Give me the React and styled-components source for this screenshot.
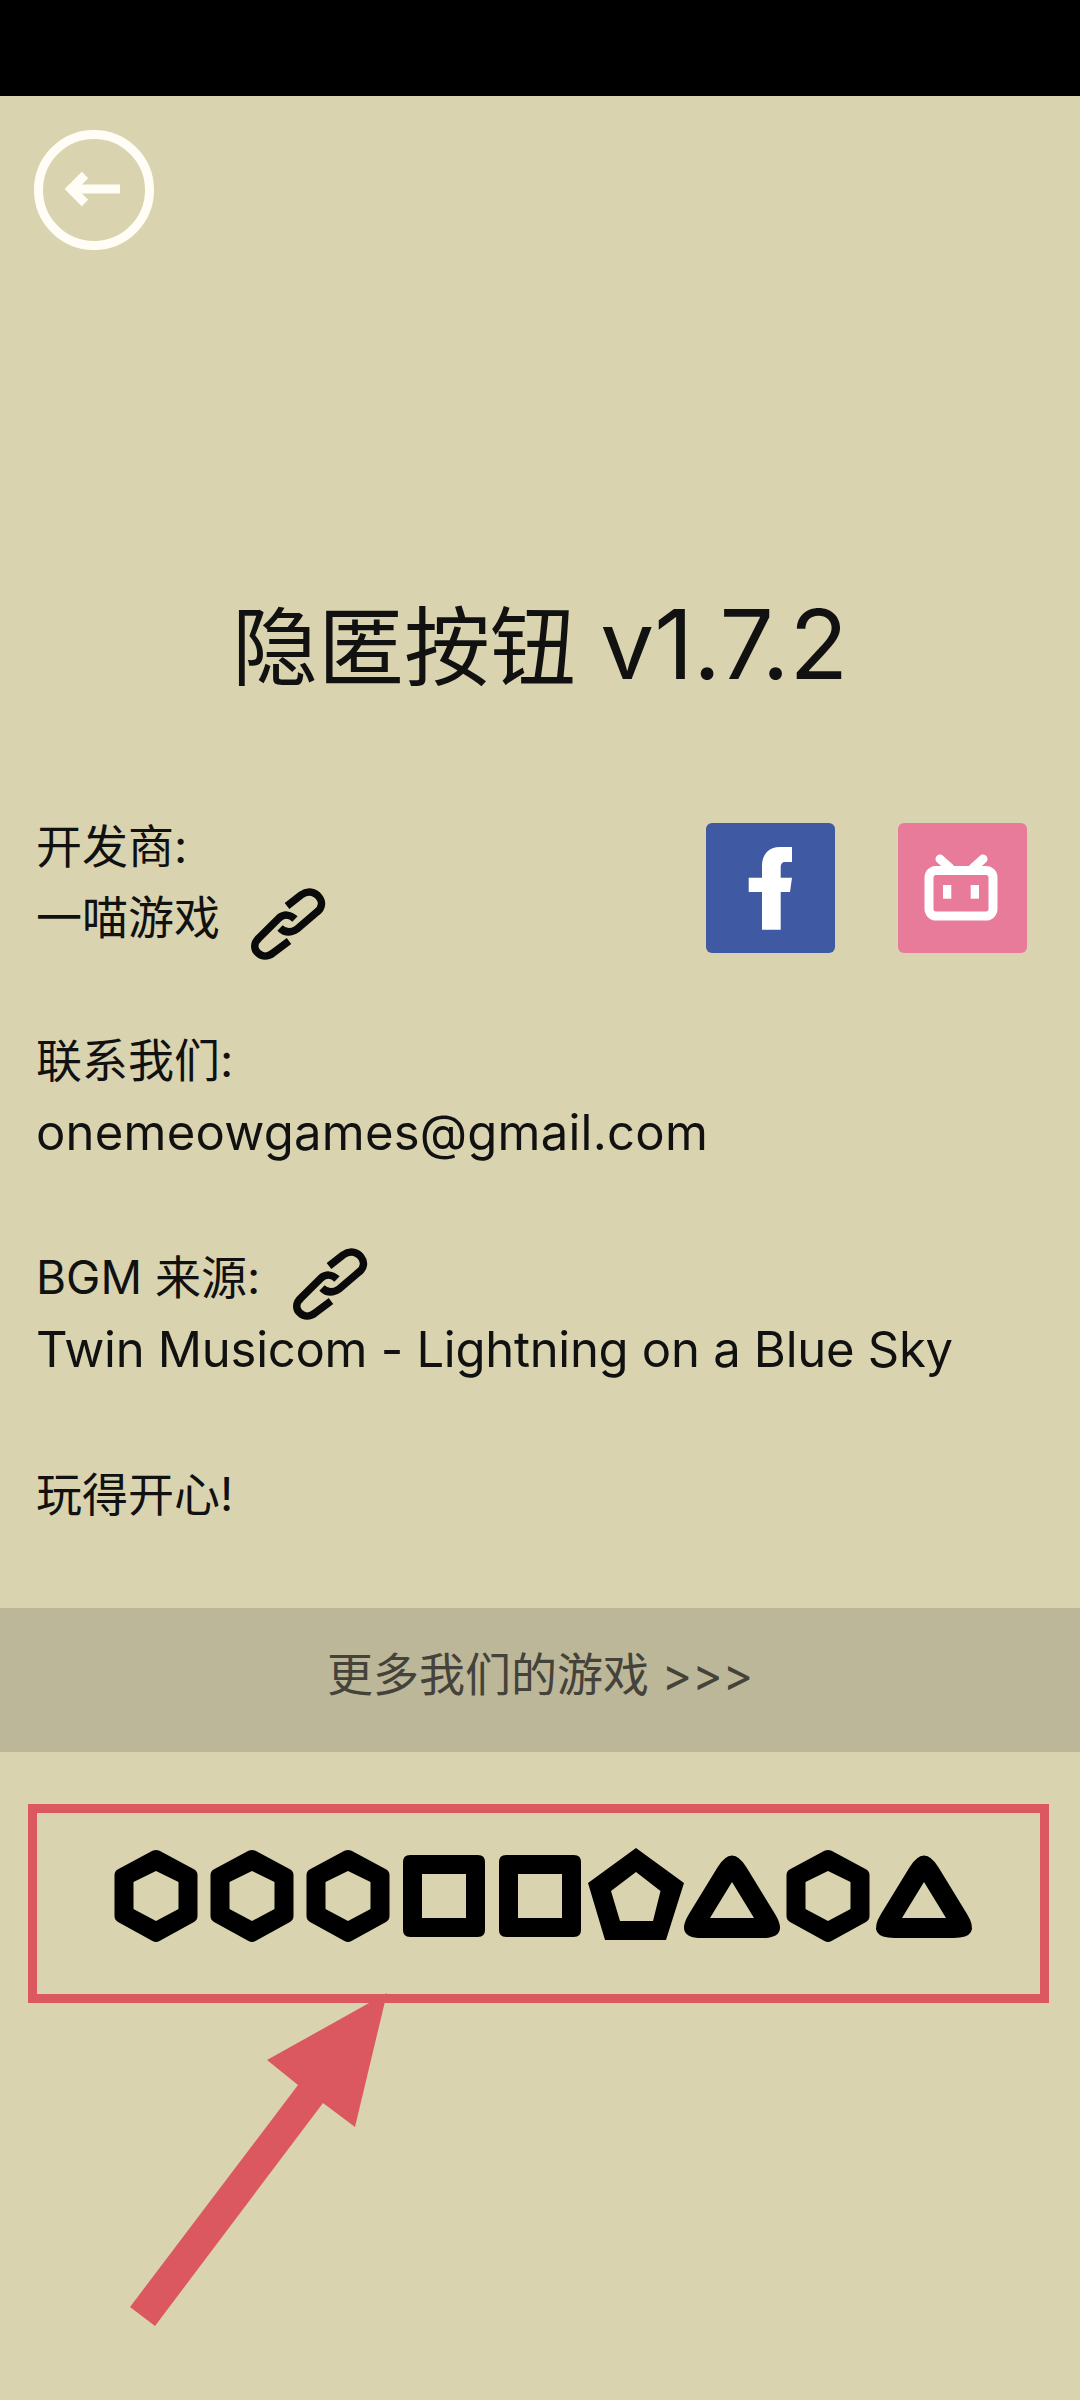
import React from 'react'
import styled, { createGlobalStyle } from 'styled-components'

const RED = '#dc5860'

const GlobalStyle = createGlobalStyle`
  html, body {
    margin: 0;
    padding: 0;
    background: #d9d4af;
  }
  body {
    font-family: Inter, "Noto Sans CJK SC", sans-serif;
    color: #111;
  }
`

const Page = styled.div`
  position: relative;
  width: 1080px;
  height: 2400px;
  overflow: hidden;
  background: #d9d4af;
`

const TopBar = styled.div`
  height: 96px;
  background: #000;
`

const BackButton = styled.button`
  display: flex;
  align-items: center;
  justify-content: center;
  width: 120px;
  height: 120px;
  margin: 34px 0 0 34px;
  padding: 0;
  box-sizing: border-box;
  border: 9px solid #fffdf6;
  border-radius: 50%;
  background: transparent;
`

const Title = styled.h1`
  height: 100px;
  margin: 344px 0 0;
  font-size: 86px;
  line-height: 100px;
  font-weight: 400;
  text-align: center;
  color: #111;
`

const Version = styled.span`
  font-size: 96px;
`

const Info = styled.section`
  display: flex;
  flex-direction: column;
  gap: 72px;
  margin-top: 119px;
  padding: 0 53px 0 34px;
`

const TopRow = styled.div`
  display: flex;
  justify-content: space-between;
  align-items: flex-start;
`

const Block = styled.div`
  display: flex;
  flex-direction: column;
  margin-top: ${ ({ $push }) => $push || 0 }px;
`

const Line = styled.div`
  display: flex;
  align-items: center;
  box-sizing: border-box;
  height: 71px;
  padding-bottom: 12px;
  padding-left: 2px;
  font-size: 46px;
  white-space: nowrap;
`

const LatinLine = styled(Line)`
  padding-bottom: 3px;
  font-size: 49px;
  letter-spacing: ${ ({ $track }) => $track }px;
`

const LinkIcon = styled.svg`
  flex: none;
  width: 74px;
  height: 70px;
  margin: 20px 0 0 ${ ({ $gap }) => $gap }px;
  overflow: visible;
`

const Socials = styled.div`
  display: flex;
  gap: 63px;
  margin-top: 10px;
`

const SocialTile = styled.svg`
  display: block;
  width: 129px;
  height: 130px;
  border-radius: 6px;
  background: ${ ({ $color }) => $color };
`

const MoreBand = styled.div`
  display: flex;
  align-items: center;
  justify-content: center;
  box-sizing: border-box;
  height: 144px;
  margin-top: 76px;
  padding-bottom: 18px;
  background: #bcb798;
  color: #45423a;
  font-size: 46px;
`

const HiddenFrame = styled.div`
  display: flex;
  justify-content: center;
  box-sizing: border-box;
  height: 199px;
  margin: 52px 31px 0 28px;
  padding: 33px 0 0 3px;
  border: 9px solid ${ RED };
`

const ShapeCell = styled.svg`
  display: block;
  flex: none;
  width: 96px;
  height: 100px;
  overflow: visible;
`

const PointerArrow = styled.svg`
  position: absolute;
  left: 120px;
  top: 1985px;
  width: 280px;
  height: 350px;
`

// closed polygon path, corners cut back by r and joined with a curve
const roundedPoly = (points, r = 0) => {
  const n = points.length
  if (!r) return 'M' + points.map(p => p.join(' ')).join('L') + 'Z'
  let d = ''
  points.forEach((p, i) => {
    const prev = points[(i + n - 1) % n]
    const next = points[(i + 1) % n]
    const toward = (q) => {
      const len = Math.hypot(q[0] - p[0], q[1] - p[1])
      return [p[0] + (q[0] - p[0]) * r / len, p[1] + (q[1] - p[1]) * r / len]
    }
    const a = toward(prev)
    const b = toward(next)
    d += `${ i ? 'L' : 'M' }${ a[0] } ${ a[1] }Q${ p[0] } ${ p[1] } ${ b[0] } ${ b[1] }`
  })
  return d + 'Z'
}

const shapes = {
  hex: {
    outer: [[48, 3], [89.5, 25], [89.5, 74], [48, 97], [6.5, 74], [6.5, 25]],
    inner: [[48, 25], [70.5, 36], [70.5, 63], [48, 75], [25.5, 63], [25.5, 36]],
    r: 4,
  },
  square: {
    outer: [[7, 9], [89, 9], [89, 91], [7, 91]],
    inner: [[26, 28], [70, 28], [70, 72], [26, 72]],
    r: 7,
  },
  pentagon: {
    outer: [[48, 2], [96, 37], [78, 94], [17, 94], [0, 37]],
    inner: [[48, 26], [72.5, 45], [65, 75], [32, 75], [23, 45]],
    r: 0,
  },
  triangle: {
    outer: [[48, -2.4], [105.6, 92], [-9.6, 92]],
    inner: [[48, 36], [70, 72], [26, 72]],
    r: 28,
  },
}

const sequence = ['hex', 'hex', 'hex', 'square', 'square', 'pentagon', 'triangle', 'hex', 'triangle']

const Shape = ({ kind }) => {
  const { outer, inner, r } = shapes[kind]
  return (
    <ShapeCell viewBox="0 0 96 100">
      <path fillRule="evenodd" fill="#000" d={ roundedPoly(outer, r) + roundedPoly(inner) } />
    </ShapeCell>
  )
}

const ChainLink = ({ gap }) => (
  <LinkIcon $gap={ gap } viewBox="12 8 74 70" fill="none" stroke="#0a0a0a" strokeWidth="7.5">
    <path d="M48 25L62 14C69 9 76 11 80 16C84 21 83 27 78 31L58 48C52 52 46 52 41 47" />
    <path d="M56 38C51 33 45 33 40 37L20 57C14 62 15 69 19 72C23 76 29 76 34 72L50 60" />
  </LinkIcon>
)

const App = () => (
  <Page>
    <GlobalStyle />
    <TopBar />
    <BackButton aria-label="back">
      <svg width="102" height="102" viewBox="9 9 102 102" fill="none" stroke="#fffdf6" strokeWidth="9">
        <path d="M86 59H38" />
        <path d="M51 45L37 59L51 73" />
      </svg>
    </BackButton>
    <Title>隐匿按钮 <Version>v1.7.2</Version></Title>
    <Info>
      <TopRow>
        <Block>
          <Line>开发商:</Line>
          <Line>一喵游戏<ChainLink gap={ 31 } /></Line>
        </Block>
        <Socials>
          <SocialTile $color="#3f5aa3" viewBox="0 0 129 130">
            <path fill="#fff" d="M86 24V39H79C76 39 74.7 41 74.7 44V54.7H86L84 69H74.7V106.7H56V69H42.7V54.7H56V43C56 31 63 24 74 24Z" />
          </SocialTile>
          <SocialTile $color="#e87a9a" viewBox="0 0 129 130">
            <g fill="none" stroke="#fff" strokeWidth="9">
              <rect x="31" y="47.5" width="64" height="45.5" rx="7" />
              <path strokeLinecap="round" d="M42 36L52 45M85 36L75 45" />
            </g>
            <rect fill="#fff" x="45" y="62" width="8.3" height="13.7" />
            <rect fill="#fff" x="72.7" y="62" width="8.3" height="13.7" />
          </SocialTile>
        </Socials>
      </TopRow>
      <Block>
        <Line>联系我们:</Line>
        <LatinLine $track={ 0.23 }>onemeowgames@gmail.com</LatinLine>
      </Block>
      <Block $push={ 3 }>
        <Line>BGM 来源:<ChainLink gap={ 33 } /></Line>
        <LatinLine $track={ -0.28 }>Twin Musicom - Lightning on a Blue Sky</LatinLine>
      </Block>
      <Block $push={ 3 }>
        <Line>玩得开心!</Line>
      </Block>
    </Info>
    <MoreBand>更多我们的游戏 &gt;&gt;&gt;</MoreBand>
    <HiddenFrame>
      { sequence.map((kind, i) => <Shape key={ i } kind={ kind } />) }
    </HiddenFrame>
    <PointerArrow viewBox="120 1985 280 350">
      <path fill={ RED } d="M387 1993L267 2060L298 2085L130 2307L155 2326L323 2103L355 2127Z" />
    </PointerArrow>
  </Page>
)

export default App
